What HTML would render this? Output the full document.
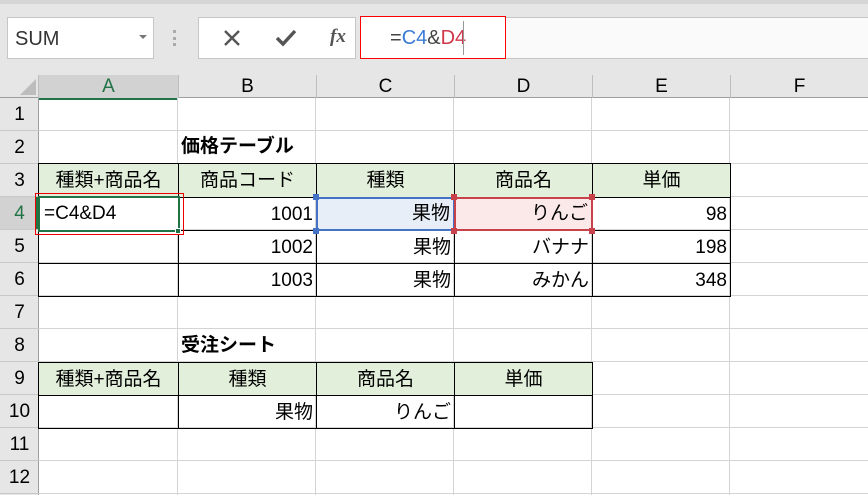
<!DOCTYPE html>
<html><head><meta charset="utf-8"><style>
*{margin:0;padding:0;box-sizing:border-box}
body{width:868px;height:495px;overflow:hidden;background:#fff;position:relative;font-family:"Liberation Sans","Noto Sans CJK JP",sans-serif;color:#000}
div{position:absolute}
.c{font-size:19px;line-height:33px;white-space:nowrap;font-family:"Liberation Sans","Noto Sans CJK JP",sans-serif}
.ctr{text-align:center}.r{text-align:right;padding-right:3px}
.bx{border:1px solid #000}
.g{background:#e2efda}
.rh{left:0;width:39px;text-align:center;font-size:19px;line-height:33px;color:#000}
.ch{top:75px;height:23px;text-align:center;font-size:19px;line-height:23px;border-left:1px solid #bdbdbd}
</style></head><body>
<div style="left:0;top:0;width:868px;height:98px;background:#e6e6e6"></div>
<div style="left:0;top:0;width:868px;height:4px;background:#d6d6d6"></div>
<div style="left:7px;top:17px;width:147px;height:42px;background:#fff;border:1px solid #c6c6c6;font-size:20px;line-height:42px;padding-left:7px;color:#333">SUM</div>
<div style="left:139px;top:35px;width:0;height:0;border-left:4px solid transparent;border-right:4px solid transparent;border-top:4px solid #777"></div>
<div style="left:173px;top:30px;width:3px;height:16px;border-left:3px dotted #aaa"></div>
<div style="left:198px;top:17px;width:158px;height:42px;background:#fff;border:1px solid #c6c6c6"></div>
<svg style="position:absolute;left:222px;top:28px" width="20" height="20"><path d="M3 3L17 17M17 3L3 17" stroke="#555" stroke-width="2.4"/></svg>
<svg style="position:absolute;left:275px;top:28px" width="22" height="20"><path d="M2 10L8 16L20 3" stroke="#555" stroke-width="3.4" fill="none"/></svg>
<div style="left:330px;top:26px;font-family:'Liberation Serif',serif;font-style:italic;font-weight:bold;font-size:19px;color:#555">fx</div>
<div style="left:360px;top:17px;width:508px;height:42px;background:#fafafa;border-top:1px solid #c6c6c6;border-bottom:1px solid #c6c6c6"></div>
<div style="left:360px;top:16px;width:146px;height:43px;background:#fff;border:1px solid #f00"></div>
<div style="left:390px;top:24px;font-size:20px;line-height:28px"><span style="color:#444">=</span><span style="color:#3a7bd5">C4</span><span style="color:#444">&amp;</span><span style="color:#d0364a">D4</span></div>
<div style="left:463px;top:21px;width:1px;height:34px;background:#999"></div>
<div style="left:0;top:72px;width:868px;height:26px;background:#e6e6e6;border-bottom:1px solid #9e9e9e"></div>
<div style="left:20px;top:79px;width:0;height:0;border-left:16px solid transparent;border-bottom:16px solid #bdbdbd"></div>
<div class="ch" style="left:38px;width:140px;background:#d2d2d2;color:#217346;border-bottom:2px solid #217346;height:25px">A</div>
<div class="ch" style="left:178px;width:138px">B</div>
<div class="ch" style="left:316px;width:138px">C</div>
<div class="ch" style="left:454px;width:138px">D</div>
<div class="ch" style="left:592px;width:138px">E</div>
<div class="ch" style="left:730px;width:138px">F</div>
<div style="left:0;top:98px;width:39px;height:397px;background:#e6e6e6;border-right:1px solid #9e9e9e"></div>
<div style="left:0;top:197px;width:38px;height:33px;background:#d2d2d2;border-right:2px solid #217346"></div>
<div style="left:39px;top:98px;width:829px;height:397px;background:repeating-linear-gradient(to bottom,transparent 0,transparent 32px,#d4d4d4 32px,#d4d4d4 33px)"></div>
<div style="left:177px;top:98px;width:1px;height:397px;background:#d4d4d4"></div>
<div style="left:315px;top:98px;width:1px;height:397px;background:#d4d4d4"></div>
<div style="left:453px;top:98px;width:1px;height:397px;background:#d4d4d4"></div>
<div style="left:591px;top:98px;width:1px;height:397px;background:#d4d4d4"></div>
<div style="left:729px;top:98px;width:1px;height:397px;background:#d4d4d4"></div>
<div style="left:0;top:98px;width:39px;height:397px;background:repeating-linear-gradient(to bottom,transparent 0,transparent 32px,#c8c8c8 32px,#c8c8c8 33px)"></div>
<div class="rh" style="top:98px">1</div>
<div class="rh" style="top:131px">2</div>
<div class="rh" style="top:164px">3</div>
<div class="rh" style="top:197px;color:#217346">4</div>
<div class="rh" style="top:230px">5</div>
<div class="rh" style="top:263px">6</div>
<div class="rh" style="top:296px">7</div>
<div class="rh" style="top:329px">8</div>
<div class="rh" style="top:362px">9</div>
<div class="rh" style="top:395px">10</div>
<div class="rh" style="top:428px">11</div>
<div class="rh" style="top:461px">12</div>
<div class="c" style="left:181px;top:130px;font-weight:bold">価格テーブル</div>
<div class="c" style="left:181px;top:329px;font-weight:bold">受注シート</div>
<div class="c ctr bx g" style="left:38px;top:163px;width:141px;height:35px">種類+商品名</div>
<div class="c ctr bx g" style="left:178px;top:163px;width:139px;height:35px">商品コード</div>
<div class="c ctr bx g" style="left:316px;top:163px;width:139px;height:35px">種類</div>
<div class="c ctr bx g" style="left:454px;top:163px;width:139px;height:35px">商品名</div>
<div class="c ctr bx g" style="left:592px;top:163px;width:139px;height:35px">単価</div>
<div class="bx" style="left:38px;top:197px;width:141px;height:100px"></div>
<div class="c r bx" style="left:178px;top:197px;width:139px;height:34px">1001</div>
<div class="c r bx" style="left:178px;top:230px;width:139px;height:34px">1002</div>
<div class="c r bx" style="left:178px;top:263px;width:139px;height:34px">1003</div>
<div class="c r bx" style="left:316px;top:230px;width:139px;height:34px">果物</div>
<div class="c r bx" style="left:316px;top:263px;width:139px;height:34px">果物</div>
<div class="c r bx" style="left:454px;top:230px;width:139px;height:34px">バナナ</div>
<div class="c r bx" style="left:454px;top:263px;width:139px;height:34px">みかん</div>
<div class="c r bx" style="left:592px;top:197px;width:139px;height:34px">98</div>
<div class="c r bx" style="left:592px;top:230px;width:139px;height:34px">198</div>
<div class="c r bx" style="left:592px;top:263px;width:139px;height:34px">348</div>
<div class="bx" style="left:38px;top:230px;width:141px;height:34px"></div>
<div class="c r" style="left:316px;top:197px;width:139px;height:34px;background:#e8eef8;border:2px solid #4472c4;line-height:30px">果物</div>
<div class="c r" style="left:454px;top:197px;width:139px;height:34px;background:#fbe9ea;border:2px solid #c8424b;line-height:30px">りんご</div>
<div style="left:313px;top:194px;width:6px;height:6px;background:#4472c4"></div>
<div style="left:313px;top:228px;width:6px;height:6px;background:#4472c4"></div>
<div style="left:451px;top:194px;width:6px;height:6px;background:#c8424b"></div>
<div style="left:451px;top:228px;width:6px;height:6px;background:#c8424b"></div>
<div style="left:589px;top:194px;width:6px;height:6px;background:#c8424b"></div>
<div style="left:589px;top:228px;width:6px;height:6px;background:#c8424b"></div>
<div style="left:35px;top:193px;width:149px;height:42px;border:1px solid #e00"></div>
<div class="c" style="left:38px;top:196px;width:142px;height:36px;background:#fff;border:2px solid #217346;line-height:31px;padding-left:4px">=C4&amp;D4</div>
<div style="left:175px;top:228px;width:6px;height:6px;background:#217346;border:1px solid #fff"></div>
<div class="c ctr bx g" style="left:38px;top:362px;width:141px;height:34px">種類+商品名</div>
<div class="c ctr bx g" style="left:178px;top:362px;width:139px;height:34px">種類</div>
<div class="c ctr bx g" style="left:316px;top:362px;width:139px;height:34px">商品名</div>
<div class="c ctr bx g" style="left:454px;top:362px;width:139px;height:34px">単価</div>
<div class="bx" style="left:38px;top:395px;width:141px;height:34px"></div>
<div class="c r bx" style="left:178px;top:395px;width:139px;height:34px">果物</div>
<div class="c r bx" style="left:316px;top:395px;width:139px;height:34px">りんご</div>
<div class="bx" style="left:454px;top:395px;width:139px;height:34px"></div>
</body></html>
